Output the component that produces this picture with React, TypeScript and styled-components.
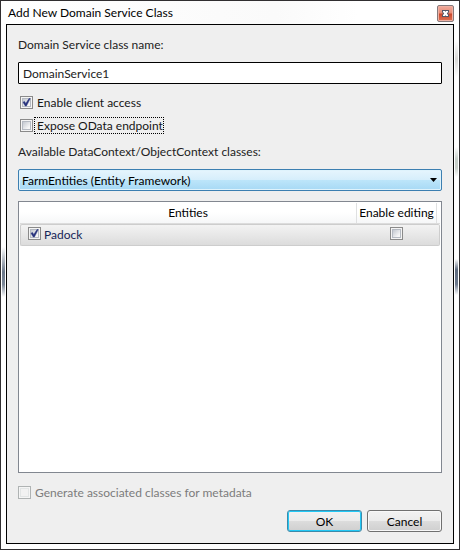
import React, { useState } from "react";
import styled, { createGlobalStyle } from "styled-components";

const GlobalStyle = createGlobalStyle`
  *, *::before, *::after { box-sizing: border-box; }
  body {
    margin: 0;
    background: #ffffff;
    color: #222222;
    font-family: Lato, "Segoe UI", "Open Sans", sans-serif;
    font-size: 12px;
    line-height: 16px;
  }
  button, input, select { font: inherit; color: inherit; margin: 0; }
`;

const Window = styled.main`
  display: flex;
  flex-direction: column;
  min-height: 100vh;
  padding: 0 5px 5px;
  border: 1px solid #302e30;
  background:
    linear-gradient(to bottom, transparent, #6b7789 50%, #7c8797 75%, transparent) 1px 246px / 3px 50px no-repeat,
    linear-gradient(to bottom, transparent, #5d6a7e 30%, #6b788c 70%, transparent) right 1px top 258px / 3px 36px no-repeat,
    linear-gradient(to bottom, transparent, #c6cfc9 40%, #c9d0ca 70%, transparent) right 1px top 146px / 3px 30px no-repeat,
    linear-gradient(to bottom, transparent, #d8d8d6 50%, transparent) right 1px top 40px / 3px 36px no-repeat,
    linear-gradient(to right, #ffffff, #fafafa 60%, #ffffff 78%);
`;

const TitleBar = styled.header`
  display: flex;
  align-items: center;
  justify-content: space-between;
  height: 23px;
  padding: 1px 0 0 2px;
`;

const Title = styled.h1`
  margin: 0;
  font-size: 12px;
  font-weight: 400;
  color: #000000;
`;

const CloseButton = styled.button`
  display: grid;
  place-items: center;
  width: 17px;
  height: 17px;
  padding: 0;
  border: 1px solid #84797b;
  border-radius: 2px;
  background: linear-gradient(to bottom, #f2ab9c, #e58b76 48%, #c9452a 52%, #dd7254);
  box-shadow: inset 0 0 0 1px #efb0a2;
`;

const Client = styled.form`
  display: flex;
  flex: 1;
  flex-direction: column;
  padding: 12px 11px 11px;
  border: 1px solid #000000;
  background: #efefef;
`;

const FieldLabel = styled.label`
  align-self: flex-start;
`;

const TextBox = styled.input`
  width: 100%;
  height: 22px;
  margin: 9px 0 10px;
  padding: 1px 4px 0;
  border: 1px solid #000000;
  border-radius: 1px;
  background: #ffffff;
  outline: none;
`;

const Options = styled.div`
  display: flex;
  flex-direction: column;
  align-items: flex-start;
  gap: 6px;
  margin-bottom: 10px;
  padding-left: 2px;
`;

const CheckRow = styled.label<{ $muted?: boolean }>`
  display: flex;
  align-items: center;
  gap: 1px;
  color: ${(p) => (p.$muted ? "#7c7c7c" : "#161616")};
`;

const CheckText = styled.span<{ $focused?: boolean }>`
  padding: 1px 0 0 2px;
  border: 1px dotted ${(p) => (p.$focused ? "#000000" : "transparent")};
  line-height: 14px;
`;

const CheckFrame = styled.span`
  position: relative;
  display: block;
  flex: none;
  width: 13px;
  height: 13px;
`;

const CheckInput = styled.input`
  display: block;
  appearance: none;
  width: 13px;
  height: 13px;
  padding: 2px;
  border: 1px solid #8a8a8a;
  background: #f4f4f4 linear-gradient(135deg, #c3c8d0, #f6f6f6 80%) content-box;
  box-shadow: inset 0 0 0 1px #f4f4f4, inset 0 0 0 2px #b5bac2;
  outline: none;

  &:disabled {
    border-color: #afb3b3;
    background: #f2f2f2;
    box-shadow: inset 0 0 0 1px #f5f5f5, inset 0 0 0 2px #e2e5e5;
  }
`;

const CheckMark = styled.svg`
  position: absolute;
  inset: 0;
  pointer-events: none;
`;

const SelectFrame = styled.div`
  position: relative;
  margin: 9px 0 10px;
`;

const Select = styled.select`
  display: block;
  appearance: none;
  width: 100%;
  height: 22px;
  padding: 1px 20px 0 3px;
  border: 1px solid #3c7fb1;
  border-radius: 2px;
  background: linear-gradient(to bottom, #e6f5fd, #d6eefb 48%, #bce5fa 52%, #a7d9f5);
  box-shadow: inset 0 0 0 1px #dff3fc;
  color: #000000;
  outline: none;
`;

const SelectArrow = styled.svg`
  position: absolute;
  top: 9px;
  right: 5px;
  pointer-events: none;
`;

const ListPane = styled.div`
  flex: 1;
  padding: 1px;
  border: 1px solid #828790;
  background: #ffffff;
`;

const Table = styled.table`
  width: 100%;
  table-layout: fixed;
  border-collapse: separate;
  border-spacing: 0;
`;

const HeaderCell = styled.th<{ $divided?: boolean }>`
  width: ${(p) => (p.$divided ? "84px" : "auto")};
  height: 21px;
  padding: ${(p) => (p.$divided ? "0 3px 0 0" : "0")};
  border-bottom: 1px solid #dcdcdc;
  background: linear-gradient(to bottom, #ffffff 45%, #f6f7f8);
  font-weight: 400;
  color: #000000;
  white-space: nowrap;
`;

const HeaderText = styled.span`
  display: block;
  height: 20px;
  border: solid #dfe0e1;
  border-width: 0 1px;
  line-height: 20px;
`;

const BodyCell = styled.td`
  height: 22px;
  padding: 1px 0 0 7px;
  border: solid #cdcdcd;
  border-width: 1px 0;
  background: linear-gradient(to bottom, #f3f3f3, #dcdcdc);
  color: #152457;

  &:first-child { border-left-width: 1px; border-radius: 2px 0 0 2px; }
  &:last-child { border-right-width: 1px; border-radius: 0 2px 2px 0; padding: 0 2px 3px 0; }
`;

const CenteredBox = styled.div`
  display: flex;
  justify-content: center;
`;

const EntityLabel = styled.label`
  display: flex;
  align-items: flex-start;
  gap: 3px;
  height: 18px;
`;

const EntityName = styled.span`
  line-height: 16px;
`;

const Metadata = styled.div`
  display: flex;
  margin: 11px 0 9px;
`;

const Actions = styled.footer`
  display: flex;
  justify-content: flex-end;
  gap: 5px;
`;

const PushButton = styled.button<{ $primary?: boolean }>`
  width: 75px;
  height: 22px;
  padding: 1px 0 0;
  border: 1px solid ${(p) => (p.$primary ? "#3c8bab" : "#707070")};
  border-radius: 3px;
  background: linear-gradient(to bottom, #f2f2f2, #ebebeb 48%, #dcdcdc 52%, #cfcfcf);
  box-shadow: inset 0 0 0 1px ${(p) => (p.$primary ? "#22c8f5" : "#f8f8f8")};
  color: #000000;
`;

type CheckProps = {
  label?: string;
  name?: string;
  checked: boolean;
  disabled?: boolean;
  focused?: boolean;
  onChange?: (value: boolean) => void;
};

function Check({ label, name, checked, disabled, focused, onChange }: CheckProps) {
  const box = (
    <CheckFrame>
      <CheckInput
        type="checkbox"
        aria-label={name}
        checked={checked}
        disabled={disabled}
        onChange={(e) => onChange?.(e.target.checked)}
      />
      {checked && (
        <CheckMark width="13" height="13" viewBox="0 0 13 13" aria-hidden="true">
          <path
            d="M3 6.2 L4.5 5.4 L5.8 7.5 L9 2.6 L10.2 2.6 L6.4 10 L5.3 10 Z"
            fill="#27327d"
            stroke="#27327d"
            strokeWidth="0.5"
          />
        </CheckMark>
      )}
    </CheckFrame>
  );
  if (!label) return box;
  return (
    <CheckRow $muted={disabled}>
      {box}
      <CheckText $focused={focused}>{label}</CheckText>
    </CheckRow>
  );
}

export default function App() {
  const [className, setClassName] = useState("DomainService1");
  const [clientAccess, setClientAccess] = useState(true);
  const [odata, setOdata] = useState(false);
  const [included, setIncluded] = useState(true);
  const [editing, setEditing] = useState(false);

  return (
    <>
      <GlobalStyle />
      <Window>
        <TitleBar>
          <Title>Add New Domain Service Class</Title>
          <CloseButton type="button" aria-label="Close">
            <svg width="9" height="9" viewBox="0 0 9 9" aria-hidden="true">
              <path d="M1 1H8V3L7 4.5L8 6V8H1V6L2 4.5L1 3Z" fill="#535666" />
              <path d="M2 2H4L4.5 3L5 2H7V3L5.8 4.5L7 6V7H5L4.5 6L4 7H2V6L3.2 4.5L2 3Z" fill="#ffffff" />
            </svg>
          </CloseButton>
        </TitleBar>
        <Client onSubmit={(e) => e.preventDefault()}>
          <FieldLabel htmlFor="class-name">Domain Service class name:</FieldLabel>
          <TextBox
            id="class-name"
            type="text"
            value={className}
            onChange={(e) => setClassName(e.target.value)}
          />
          <Options>
            <Check label="Enable client access" checked={clientAccess} onChange={setClientAccess} />
            <Check label="Expose OData endpoint" checked={odata} onChange={setOdata} focused />
          </Options>
          <FieldLabel htmlFor="context-class">Available DataContext/ObjectContext classes:</FieldLabel>
          <SelectFrame>
            <Select id="context-class">
              <option>FarmEntities (Entity Framework)</option>
            </Select>
            <SelectArrow width="7" height="4" viewBox="0 0 7 4" aria-hidden="true">
              <path d="M0 0H7L3.5 4Z" fill="#000000" />
            </SelectArrow>
          </SelectFrame>
          <ListPane>
            <Table>
              <thead>
                <tr>
                  <HeaderCell scope="col">Entities</HeaderCell>
                  <HeaderCell scope="col" $divided>
                    <HeaderText>Enable editing</HeaderText>
                  </HeaderCell>
                </tr>
              </thead>
              <tbody>
                <tr>
                  <BodyCell>
                    <EntityLabel>
                      <Check checked={included} onChange={setIncluded} />
                      <EntityName>Padock</EntityName>
                    </EntityLabel>
                  </BodyCell>
                  <BodyCell>
                    <CenteredBox>
                      <Check name="Enable editing for Padock" checked={editing} onChange={setEditing} />
                    </CenteredBox>
                  </BodyCell>
                </tr>
              </tbody>
            </Table>
          </ListPane>
          <Metadata>
            <Check label="Generate associated classes for metadata" checked={false} disabled />
          </Metadata>
          <Actions>
            <PushButton type="submit" $primary>OK</PushButton>
            <PushButton type="button">Cancel</PushButton>
          </Actions>
        </Client>
      </Window>
    </>
  );
}
